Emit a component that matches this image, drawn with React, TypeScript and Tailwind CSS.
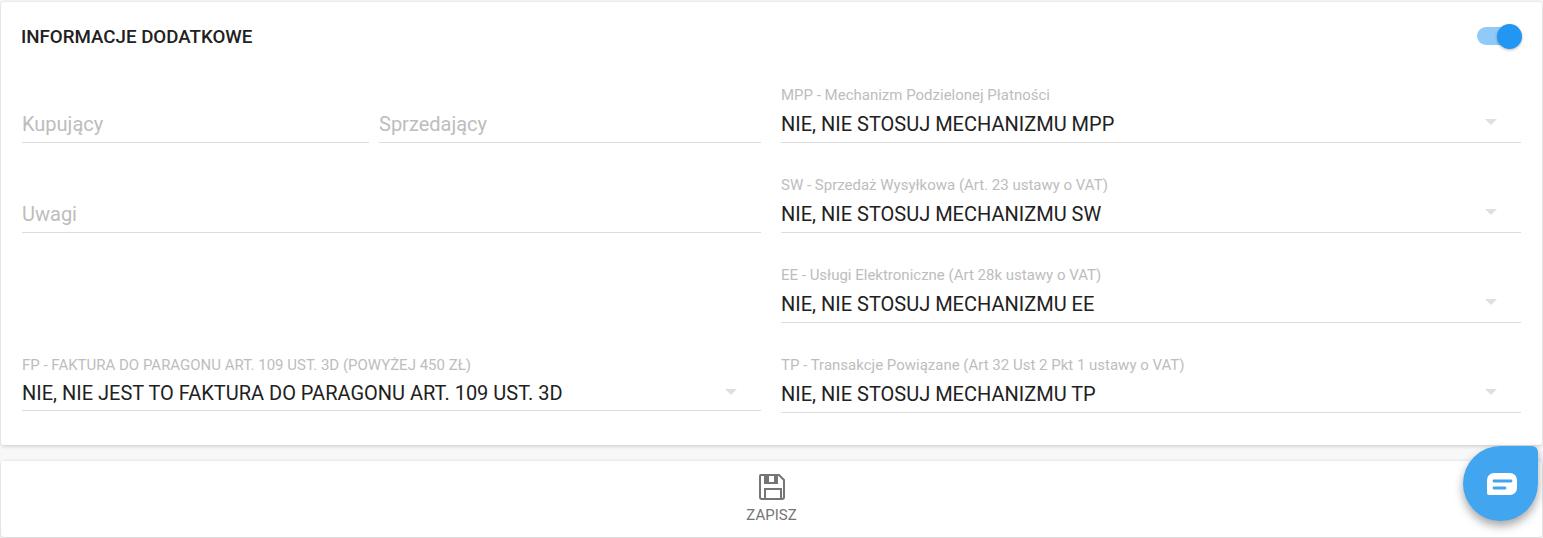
const Arrow: React.FC = () => (
  <span className="w-0 h-0 border-x-[6px] border-x-transparent border-t-[6px] border-t-[#e0e0e0]" />
);

type FieldProps = {
  label?: string;
  value?: string;
  placeholder?: string;
  className?: string;
  compact?: boolean;
};

const Field: React.FC<FieldProps> = ({ label, value, placeholder, className = '', compact = false }) => (
  <div className={`flex flex-col justify-end ${className}`}>
    {label && (
      <div className={`text-[15px] leading-4 text-[#bdbdbd] truncate ${compact ? 'mb-[3px]' : 'mb-[2px]'}`}>{label}</div>
    )}
    <div
      className={`flex items-center justify-between border-b border-[#dcdcdc] ${
        compact ? 'h-[35px]' : value ? 'h-[38px]' : 'h-[37px]'
      }`}
    >
      {value ? (
        <span className="text-[20px] text-[#212121]">{value}</span>
      ) : (
        <span className="text-[20px] text-[#bdbdbd]">{placeholder}</span>
      )}
      {value && (
        <span className="flex mr-6 mb-[3px]">
          <Arrow />
        </span>
      )}
    </div>
  </div>
);

export default function App() {
  return (
    <div className="relative w-[1543px] h-[538px] overflow-hidden bg-[#f8f8f8] font-['Roboto',sans-serif] pt-[2px] px-[1px]">
      <div className="h-[443px] bg-white rounded-[3px] shadow-[0_1px_4px_rgba(0,0,0,0.2)] pl-[21px] pr-[21px]">
        <div className="flex items-center justify-between h-[68px]">
          <h2 className="text-[18.72px] font-medium text-[#212121] -ml-px mt-[2px]">INFORMACJE DODATKOWE</h2>
          <div className="relative w-[45px] h-[25px] flex items-center -mr-px">
            <div className="w-[40px] h-[18px] rounded-full bg-[#90caf9]" />
            <div className="absolute right-0 top-0 w-[25px] h-[25px] rounded-full bg-[#2196f3] shadow-[0_1px_3px_rgba(0,0,0,0.3)]" />
          </div>
        </div>
        <div className="grid grid-cols-[739px_740px] gap-x-5 auto-rows-[90px] mt-[-17px]">
          <div className="flex gap-[10px]">
            <Field placeholder="Kupujący" className="w-[347px]" />
            <Field placeholder="Sprzedający" className="flex-1" />
          </div>
          <Field label="MPP - Mechanizm Podzielonej Płatności" value="NIE, NIE STOSUJ MECHANIZMU MPP" />
          <Field placeholder="Uwagi" />
          <Field label="SW - Sprzedaż Wysyłkowa (Art. 23 ustawy o VAT)" value="NIE, NIE STOSUJ MECHANIZMU SW" />
          <div />
          <Field label="EE - Usługi Elektroniczne (Art 28k ustawy o VAT)" value="NIE, NIE STOSUJ MECHANIZMU EE" />
          <Field
            label="FP - FAKTURA DO PARAGONU ART. 109 UST. 3D (POWYŻEJ 450 ZŁ)"
            value="NIE, NIE JEST TO FAKTURA DO PARAGONU ART. 109 UST. 3D"
            className="mb-[2px]"
            compact
          />
          <Field
            label="TP - Transakcje Powiązane (Art 32 Ust 2 Pkt 1 ustawy o VAT)"
            value="NIE, NIE STOSUJ MECHANIZMU TP"
          />
        </div>
      </div>
      <div className="mt-[16px] h-[76px] bg-white rounded-[3px] shadow-[0_1px_4px_rgba(0,0,0,0.2)] flex flex-col items-center pt-[12px]">
        <svg width="28" height="28" viewBox="0 0 28 28" fill="none">
          <path d="M3 2h18l5 5v17a2 2 0 0 1-2 2H4a2 2 0 0 1-2-2V3a1 1 0 0 1 1-1z" stroke="#757575" strokeWidth="2" />
          <path d="M6 2h14v9H6z" fill="#757575" />
          <path d="M11 3h5v6h-5z" fill="#fff" />
          <path d="M7 25v-9h16v9" stroke="#757575" strokeWidth="2" />
        </svg>
        <span className="text-[15px] leading-4 mt-[6px] text-[#757575]">ZAPISZ</span>
      </div>
      <div className="absolute left-[1463px] top-[446px] w-[75px] h-[75px] bg-[#42a5f0] rounded-[50%_6px_50%_50%] shadow-[0_5px_10px_rgba(0,0,0,0.35)] flex items-center justify-center">
        <svg width="30" height="22" viewBox="0 0 30 22" className="ml-[3px]">
          <path d="M7 0h16a7 7 0 0 1 7 7v8a7 7 0 0 1-7 7H2a2 2 0 0 1-2-2V7a7 7 0 0 1 7-7z" fill="#fff" />
          <path d="M7 8h17M7 15h11" stroke="#42a5f0" strokeWidth="2.8" strokeLinecap="round" />
        </svg>
      </div>
    </div>
  );
}
